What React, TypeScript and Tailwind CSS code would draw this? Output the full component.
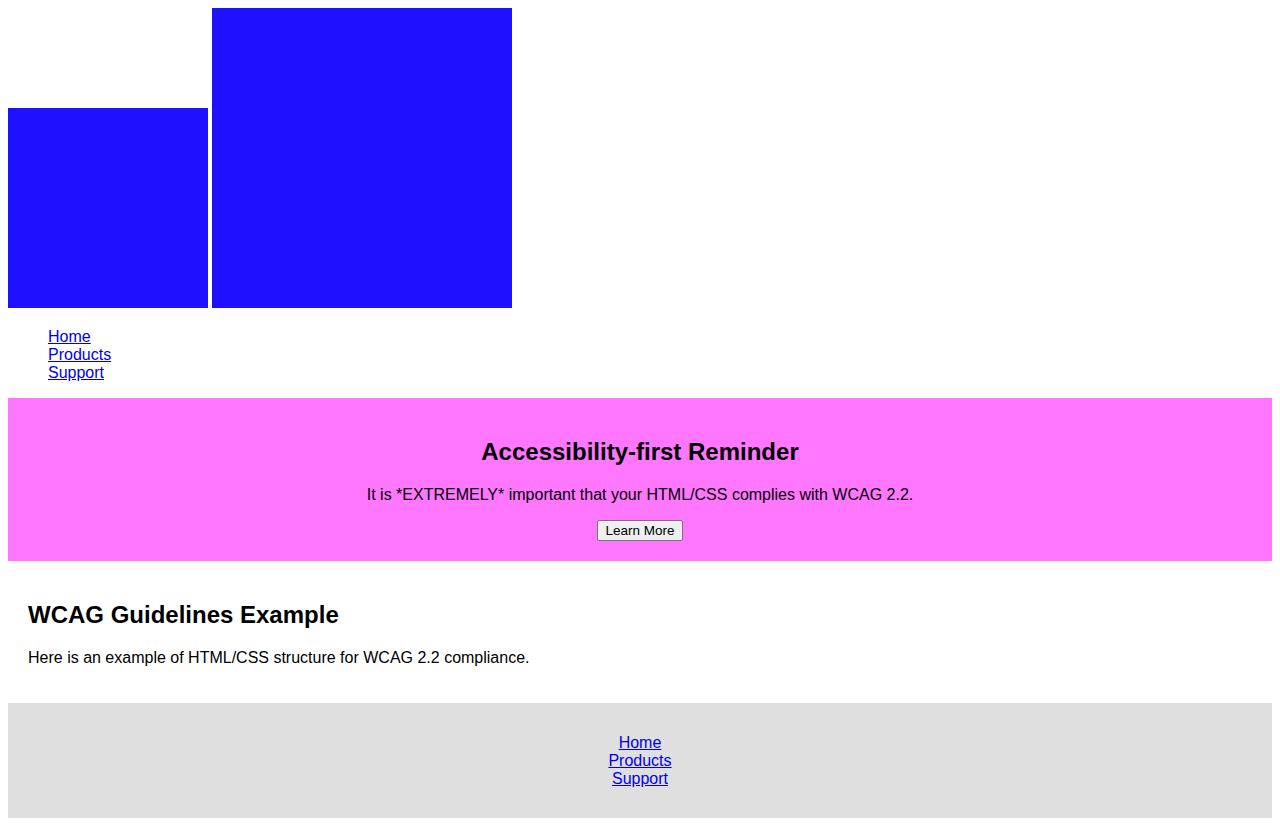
export default function App() {
	return (
		<div className="p-2 font-['Liberation_Sans',Arial,sans-serif] text-base text-black bg-white">
			<header>
				<div className="flex items-end gap-1 h-[300px]">
					<div role="img" aria-label="Logo" className="w-[200px] h-[200px] bg-[#1f10ff]" />
					<div role="img" aria-label="Banner" className="w-[300px] h-[300px] bg-[#1f10ff]" />
				</div>
				<nav>
					<ul className="mt-[20px] mb-[16px] pl-10 leading-[18px]">
						<li><a href="#" className="text-[#0000ee] underline">Home</a></li>
						<li><a href="#" className="text-[#0000ee] underline">Products</a></li>
						<li><a href="#" className="text-[#0000ee] underline">Support</a></li>
					</ul>
				</nav>
			</header>

			<section className="bg-[#ff77ff] p-5 text-center">
				<h2 className="text-2xl font-bold leading-[28px] mt-5 mb-5">Accessibility-first Reminder</h2>
				<p className="leading-[18px] mb-4">It is *EXTREMELY* important that your HTML/CSS complies with WCAG 2.2.</p>
				<div className="flex justify-center">
					<button className="h-[21px] px-[7px] text-[13.5px] leading-[15px] bg-[#efefef] border border-[#767676] rounded-[2px]">Learn More</button>
				</div>
			</section>

			<main className="p-5">
				<h2 className="text-2xl font-bold leading-[28px] mt-5 mb-5">WCAG Guidelines Example</h2>
				<p className="leading-[18px] mb-4">Here is an example of HTML/CSS structure for WCAG 2.2 compliance.</p>
			</main>

			<footer className="bg-[#dfdfdf] pt-[31px] pb-[30px] text-center">
				<ul className="leading-[18px]">
					<li><a href="#" className="text-[#0000ee] underline">Home</a></li>
					<li><a href="#" className="text-[#0000ee] underline">Products</a></li>
					<li><a href="#" className="text-[#0000ee] underline">Support</a></li>
				</ul>
			</footer>
		</div>
	)
}
